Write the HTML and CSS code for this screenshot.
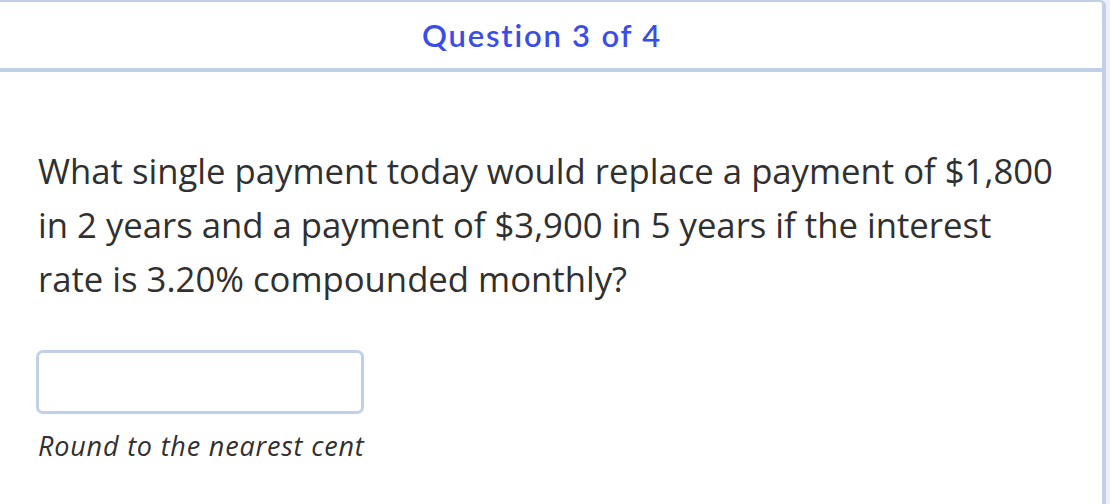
FILE: index.html
```html
<!DOCTYPE html>
<html>
<head>
<meta charset="utf-8">
<link rel="stylesheet" href="styles.css">
</head>
<body>
<div class="card">
  <div class="card-header">Question 3 of 4</div>
  <div class="card-body">
    <p class="question">What single payment today would replace a payment of $1,800 in 2 years and a payment of $3,900 in 5 years if the interest rate is 3.20% compounded monthly?</p>
    <input class="answer" type="text">
    <p class="hint">Round to the nearest cent</p>
  </div>
</div>
</body>
</html>
```
FILE: styles.css
```css
html, body {
  margin: 0;
  padding: 0;
  height: 100%;
  overflow: hidden;
}
body {
  background: #eef1f9;
}
.card {
  box-sizing: border-box;
  margin-left: -22px;
  width: 1128px;
  height: 100%;
  background: #ffffff;
  border-top: 2px solid #c0d0e8;
  border-right: 4px solid #c0d0e8;
  border-left: 4px solid #c0d0e8;
  border-radius: 6px 6px 0 0;
}
.card-header {
  height: 66px;
  border-bottom: 4px solid #c0d0e8;
  display: flex;
  align-items: center;
  justify-content: center;
  font-family: Lato, "Liberation Sans", sans-serif;
  font-size: 31px;
  font-weight: 600;
  color: #3a4de6;
  letter-spacing: 1.8px;
}
.card-body {
  padding: 72px 0 0 56px;
}
.question {
  margin: 0;
  width: 1020px;
  font-family: "Open Sans", "Liberation Sans", sans-serif;
  font-size: 34.7px;
  line-height: 54px;
  color: #303030;
}
.answer {
  display: block;
  box-sizing: border-box;
  margin: 44px 0 0 -2px;
  width: 328px;
  height: 64px;
  border: 3px solid #c0d0e8;
  border-radius: 7px;
  background: #fff;
  outline: none;
}
.hint {
  margin: 14px 0 0 0;
  font-family: "Open Sans", "Liberation Sans", sans-serif;
  font-style: italic;
  font-size: 27px;
  line-height: 36px;
  letter-spacing: 0.8px;
  color: #303030;
}
```
